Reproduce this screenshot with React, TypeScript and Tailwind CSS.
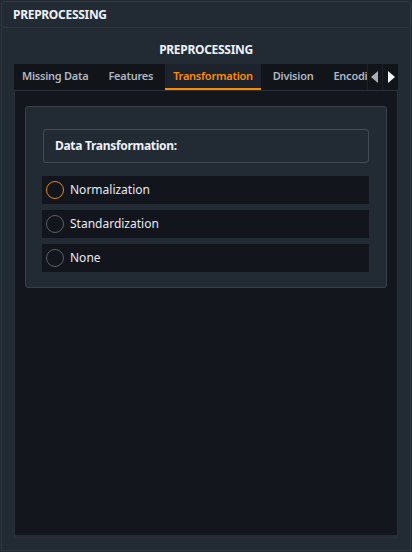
import { useState } from "react"

const tabs = ["Missing Data", "Features", "Transformation", "Division", "Encoding"]
const options = ["Normalization", "Standardization", "None"]

export default function App() {
    const [active, setActive] = useState("Transformation")
    const [choice, setChoice] = useState("Normalization")

    return (
        <div className="w-[412px] h-[552px] bg-[#222a34] p-px flex flex-col font-['Noto_Sans','Open_Sans',sans-serif] text-[#e6e9ee] overflow-hidden">
            {/* top header */}
            <div className="h-[27px] shrink-0 border border-[#2f3742] rounded-[3px] px-[11px] flex items-center">
                <span className="text-[12px] font-bold tracking-tight text-[#eef1f5]">PREPROCESSING</span>
            </div>

            {/* body */}
            <div className="flex-1 flex flex-col border-x border-b border-[#2d3540] px-[12px] pb-[12px]">
                <div className="h-[36px] shrink-0 flex items-end justify-center pb-[5px]">
                    <span className="text-[12px] font-bold tracking-tight text-[#eef1f5]">PREPROCESSING</span>
                </div>

                {/* tab bar */}
                <div className="h-[26px] shrink-0 bg-[#111419] flex items-stretch overflow-hidden">
                    <div className="flex-1 flex items-stretch overflow-hidden">
                        {tabs.map((tab) => (
                            <button
                                key={tab}
                                onClick={() => setActive(tab)}
                                className={
                                    "shrink-0 px-[8px] mr-[4px] pt-px text-[11px] font-semibold tracking-[-0.25px] whitespace-nowrap border-b-2 " +
                                    (active === tab
                                        ? "text-[#ff8c00] bg-[#1d232c] border-[#ff8c00]"
                                        : "text-[#aeb7c4] border-transparent")
                                }
                            >
                                {tab}
                            </button>
                        ))}
                    </div>
                    <div className="w-[31px] shrink-0 flex items-center bg-[#111419] border-l border-[#1c2028]">
                        <button className="w-[15px] h-full flex items-center justify-center border-r border-[#1c2028]">
                            <svg width="8" height="12" viewBox="0 0 8 12">
                                <path d="M7 0 L0 6 L7 12 Z" fill="#a9aeb5" />
                            </svg>
                        </button>
                        <button className="w-[15px] h-full flex items-center justify-center">
                            <svg width="8" height="12" viewBox="0 0 8 12">
                                <path d="M1 0 L8 6 L1 12 Z" fill="#f2f4f6" />
                            </svg>
                        </button>
                    </div>
                </div>

                {/* content */}
                <div className="flex-1 bg-[#13161d] border border-[#2b3039] shadow-[inset_0_-2px_0_#262b33] px-[10px] pt-[15px]">
                    <div className="bg-[#222a34] border border-[#3a4048] rounded-[3px] pl-[17px] pr-[17px] pt-[22px] pb-[15px]">
                        <div className="h-[34px] border border-[#454b53] rounded-[3px] flex items-center px-[11px]">
                            <span className="text-[12px] font-bold tracking-tight text-[#eef1f5]">Data Transformation:</span>
                        </div>
                        <div className="mt-[13px] -ml-px flex flex-col gap-[6px]">
                            {options.map((opt) => (
                                <button
                                    key={opt}
                                    onClick={() => setChoice(opt)}
                                    className="h-[28px] bg-[#12151c] flex items-center gap-[6px] pl-[4px] text-left"
                                >
                                    <span
                                        className={
                                            "w-[18px] h-[18px] rounded-full border-[1.5px] " +
                                            (choice === opt ? "border-[#e08a12]" : "border-[#5a5f66]")
                                        }
                                    />
                                    <span className="text-[12px] text-[#e8ebef]">{opt}</span>
                                </button>
                            ))}
                        </div>
                    </div>
                </div>
            </div>
        </div>
    )
}
